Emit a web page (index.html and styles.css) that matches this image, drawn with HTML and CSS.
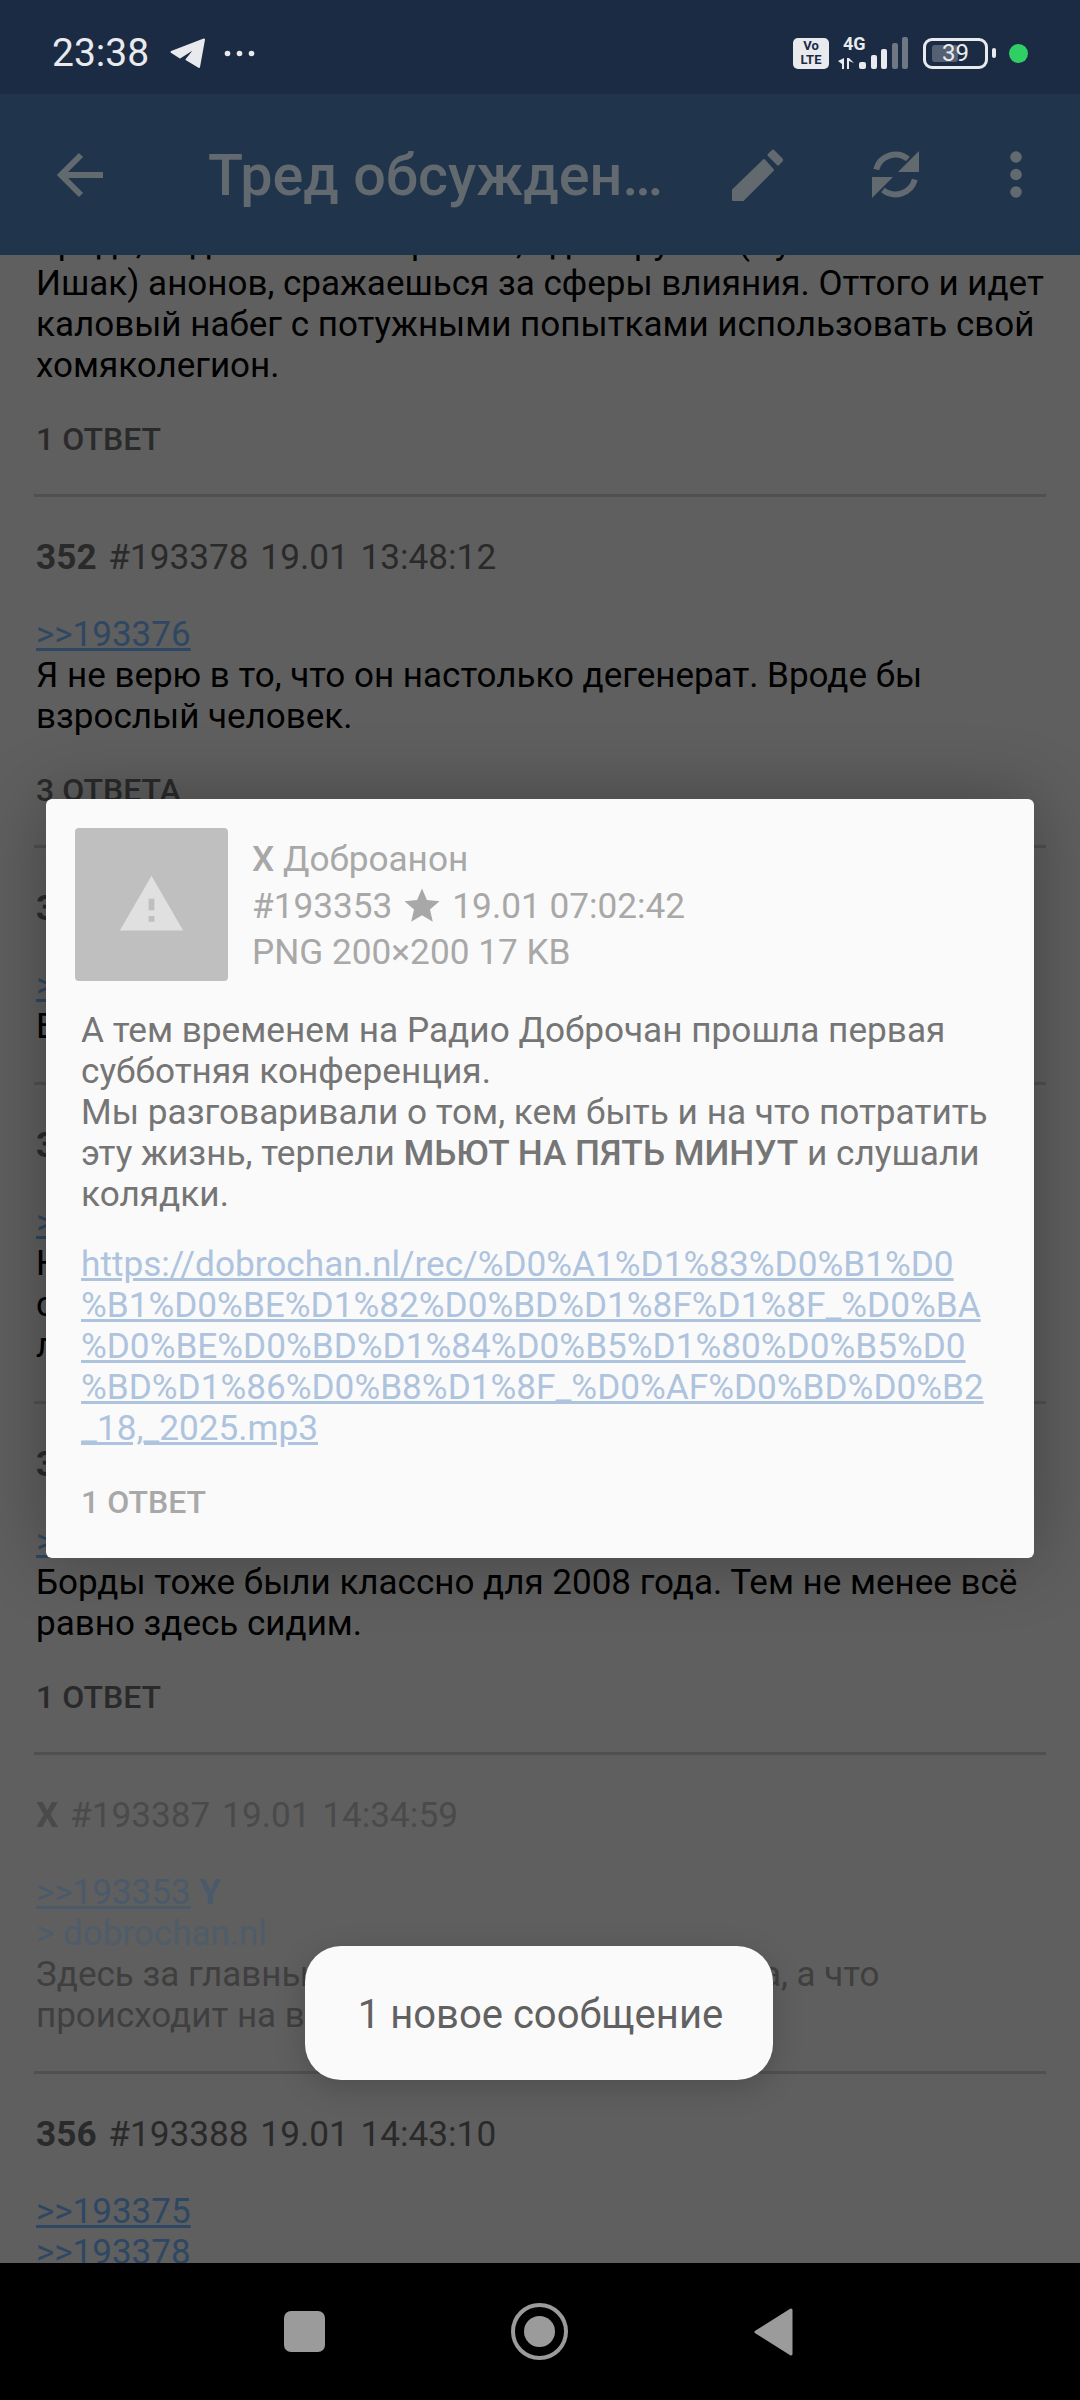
FILE: index.html
```html
<!DOCTYPE html>
<html lang="ru">
<head>
  <meta charset="UTF-8" />
  <meta name="viewport" content="width=device-width, initial-scale=1.0"/>
  <title>Тред обсуждения</title>
  <link rel="stylesheet" href="styles.css">
</head>
<body>
  <div class="screen">
    <div class="status-bar">
      <span class="clock">23:38</span>
      <svg class="tg-icon" viewBox="0 0 36 31"><path d="M1.500 14 34 1.500 29 29 16.500 21.500 26.500 9 10 19.500Z" fill="#e8eaed" stroke="#e8eaed" stroke-width="2" stroke-linejoin="round"/></svg>
      <svg class="more-dots" viewBox="0 0 31 7"><circle cx="3.500" cy="3.500" r="2.800" fill="#e8eaed"/><circle cx="15.500" cy="3.500" r="2.800" fill="#e8eaed"/><circle cx="27.500" cy="3.500" r="2.800" fill="#e8eaed"/></svg>
      <span class="status-gap"></span>
      <span class="volte">Vo<br>LTE</span>
      <svg class="signal" viewBox="0 0 70 34">
        <text x="5" y="14" class="signal-text">4G</text>
        <path d="M0 25 6 22V33H4V28ZM9 33V22H11L16 27 11 25V33Z" fill="#e8eaed"/>
        <rect x="21" y="26" width="7" height="7" rx="2" fill="#e8eaed"/>
        <rect x="33" y="19" width="6" height="14" rx="2" fill="#e8eaed"/>
        <rect x="43" y="13" width="6" height="20" rx="2" fill="#e8eaed"/>
        <rect x="54" y="7" width="6" height="26" rx="2" fill="#6f7782"/>
        <rect x="64" y="1" width="6" height="32" rx="2" fill="#6f7782"/>
      </svg>
      <span class="battery"><span class="battery-fill"></span><span class="battery-num">39</span></span>
      <span class="battery-cap"></span>
      <span class="green-dot"></span>
    </div>

    <div class="toolbar">
      <svg class="back-icon" viewBox="0 0 46 46"><path d="M46 23H5M24 3 4 23 24 43" fill="none" stroke="#62696f" stroke-width="6"/></svg>
      <span class="toolbar-title">Тред обсужден…</span>
      <svg class="pencil" viewBox="0 0 51 52"><path d="M1 41 32 11 41 21 11 51H1Z" fill="#62696f" stroke="#62696f" stroke-width="2" stroke-linejoin="round"/><path d="M37 6 41 2 50 11 46 15Z" fill="#62696f" stroke="#62696f" stroke-width="3" stroke-linejoin="round"/></svg>
      <svg class="refresh" viewBox="0 0 47 47">
        <path d="M4.200 18.500A20 20 0 0 1 36 8M42.800 28.500A20 20 0 0 1 11 39" fill="none" stroke="#62696f" stroke-width="6"/>
        <path d="M47 0V21H26ZM0 26H21L0 47Z" fill="#62696f"/>
      </svg>
      <svg class="menu-dots" viewBox="0 0 12 47"><circle cx="6" cy="6" r="5.800" fill="#62696f"/><circle cx="6" cy="23.500" r="5.800" fill="#62696f"/><circle cx="6" cy="41" r="5.800" fill="#62696f"/></svg>
    </div>

    <div class="content">
      <div class="thread">
        <div class="post">
          <p class="body body-fixed">Вроде, подобно всем прочим, одна группа (Луна и<br>Ишак) анонов, сражаешься за сферы влияния. Оттого и идет<br>каловый набег с потужными попытками использовать свой<br>хомяколегион.</p>
          <div class="replies">1 ОТВЕТ</div>
        </div>

        <div class="post">
          <div class="post-head"><b>352</b> #193378 19.01 13:48:12</div>
          <p class="body"><a class="ref">&gt;&gt;193376</a><br>Я не верю в то, что он настолько дегенерат. Вроде бы взрослый человек.</p>
          <div class="replies">3 ОТВЕТА</div>
        </div>

        <div class="post">
          <div class="post-head"><b>353</b> #193379 19.01 13:51:40</div>
          <p class="body"><a class="ref">&gt;&gt;193378</a><br>Вроде бы да.</p>
        </div>

        <div class="post">
          <div class="post-head"><b>354</b> #193381 19.01 13:58:02</div>
          <p class="body"><a class="ref">&gt;&gt;193378</a><br>Не верю.<br>с тех пор<br>лучше не стало.</p>
        </div>

        <div class="post">
          <div class="post-head"><b>355</b> #193385 19.01 14:20:33</div>
          <p class="body"><a class="ref">&gt;&gt;193378</a><br>Борды тоже были классно для 2008 года. Тем не менее всё равно здесь сидим.</p>
          <div class="replies">1 ОТВЕТ</div>
        </div>

        <div class="post post-op">
          <div class="post-head"><b>X</b> #193387 19.01 14:34:59</div>
          <p class="body"><a class="ref">&gt;&gt;193353</a> <b class="ref-name">Y</b><br><span class="quote">&gt; dobrochan.nl</span><br>Здесь за главным столом сидит Доброанона, а что<br>происходит на всех остальных?</p>
        </div>

        <div class="post">
          <div class="post-head"><b>356</b> #193388 19.01 14:43:10</div>
          <p class="body"><a class="ref">&gt;&gt;193375</a><br><a class="ref">&gt;&gt;193378</a></p>
        </div>
      </div>
    </div>

    <div class="nav-bar">
      <span class="nav-square"></span>
      <svg class="nav-home" viewBox="0 0 57 57"><circle cx="28.500" cy="28.500" r="26.500" fill="none" stroke="#9b9b9b" stroke-width="4"/><circle cx="28.500" cy="28.500" r="15.500" fill="#9b9b9b"/></svg>
      <svg class="nav-back" viewBox="0 0 39 48"><path d="M37 2 2 24 37 46Z" fill="#9b9b9b" stroke="#9b9b9b" stroke-width="3" stroke-linejoin="round"/></svg>
    </div>

    <div class="dialog">
      <div class="dialog-head">
        <div class="thumb">
          <svg viewBox="0 0 24 24" class="thumb-warn"><path d="M1 21h22L12 2 1 21zm12-3h-2v-2h2v2zm0-4h-2v-4h2v4z" fill="#e0e0e0"/></svg>
        </div>
        <div class="dialog-meta">
          <div><b class="meta-name">X</b> Доброанон</div>
          <div class="meta-row">
            <span>#193353</span>
            <svg class="star" viewBox="0 0 24 24"><path d="M12 17.270 18.180 21l-1.640-7.030L22 9.240l-7.190-.610L12 2 9.190 8.630 2 9.240l5.460 4.730L5.820 21z" fill="#a8a8a8"/></svg>
            <span>19.01 07:02:42</span>
          </div>
          <div>PNG 200×200 17 KB</div>
        </div>
      </div>
      <p class="dialog-body">А тем временем на Радио Доброчан прошла первая субботняя конференция.<br>Мы разговаривали о том, кем быть и на что потратить эту жизнь, терпели <b class="shout">МЬЮТ НА ПЯТЬ МИНУТ</b> и слушали колядки.</p>
      <p class="dialog-body dialog-link"><a>https://dobrochan.nl/rec/%D0%A1%D1%83%D0%B1%D0<br>%B1%D0%BE%D1%82%D0%BD%D1%8F%D1%8F_%D0%BA<br>%D0%BE%D0%BD%D1%84%D0%B5%D1%80%D0%B5%D0<br>%BD%D1%86%D0%B8%D1%8F_%D0%AF%D0%BD%D0%B2<br>_18,_2025.mp3</a></p>
      <div class="dialog-replies">1 ОТВЕТ</div>
    </div>

    <div class="toast">1 новое сообщение</div>
  </div>
</body>
</html>
```

FILE: styles.css
```css
* {
  box-sizing: border-box;
}

html, body {
  margin: 0;
  padding: 0;
}

body {
  font-family: Roboto, 'Noto Sans', sans-serif;
  background: #000;
}

.screen {
  position: relative;
  width: 1080px;
  height: 2400px;
  display: flex;
  flex-direction: column;
  overflow: hidden;
  background: #5f5f5f;
}

/* status bar */
.status-bar {
  height: 94px;
  flex: none;
  display: flex;
  align-items: center;
  padding: 12px 52px 0 52px;
  background: #1b2b43;
  color: #e8eaed;
}

.clock {
  font-size: 39px;
  line-height: 40px;
}

.tg-icon {
  width: 36px;
  height: 31px;
  margin-left: 21px;
}

.more-dots {
  width: 31px;
  height: 7px;
  margin-left: 18px;
}

.status-gap {
  flex: 1;
}

.volte {
  width: 36px;
  height: 31px;
  border-radius: 5px;
  background: #e8eaed;
  color: #1b2b43;
  font-size: 13px;
  font-weight: 700;
  line-height: 14px;
  text-align: center;
  padding-top: 1px;
}

.signal {
  width: 70px;
  height: 34px;
  margin-left: 9px;
}

.signal-text {
  font: 700 18px Roboto, sans-serif;
  fill: #e8eaed;
}

.battery {
  position: relative;
  width: 65px;
  height: 31px;
  margin-left: 15px;
  padding: 4px 6px;
  border: 3px solid #e8eaed;
  border-radius: 9px;
}

.battery-fill {
  display: block;
  width: 26px;
  height: 100%;
  border-radius: 3px;
  background: #566073;
}

.battery-num {
  position: absolute;
  top: 0;
  left: 0;
  right: 0;
  font-size: 24px;
  line-height: 25px;
  text-align: center;
}

.battery-cap {
  width: 4px;
  height: 10px;
  margin-left: 4px;
  border-radius: 2px;
  background: #e8eaed;
}

.green-dot {
  width: 19px;
  height: 19px;
  margin-left: 13px;
  border-radius: 50%;
  background: #2fcf66;
}

/* toolbar */
.toolbar {
  height: 161px;
  flex: none;
  display: flex;
  align-items: center;
  position: relative;
  z-index: 1;
  background: #20344b;
}

.back-icon {
  width: 46px;
  height: 46px;
  margin-left: 57px;
}

.toolbar-title {
  flex: 1;
  margin-left: 105px;
  padding-top: 2px;
  font-size: 57.5px;
  font-weight: 500;
  color: #62696f;
  white-space: nowrap;
}

.pencil {
  width: 51px;
  height: 52px;
}

.refresh {
  width: 47px;
  height: 47px;
  margin-left: 89px;
}

.menu-dots {
  width: 12px;
  height: 47px;
  margin: 0 58px 0 91px;
}

/* thread */
.content {
  flex: 1;
  min-height: 0;
  overflow: hidden;
}

.thread {
  margin-top: -33px;
  padding: 0 34px;
  color: #000;
}

.post {
  padding: 39px 0 35px 2px;
  border-bottom: 3px solid #505050;
}

.post:first-child {
  padding-top: 0;
}

.post:last-child {
  border-bottom: none;
}

.post-head {
  font-size: 35.2px;
  line-height: 42px;
  margin-bottom: 36px;
  word-spacing: 3px;
  color: #2a2a2a;
}

.post-op .post-head {
  color: #4a4a4a;
}

.post-op .body {
  color: #3f3f3f;
}

.body {
  margin: 0;
  font-size: 35px;
  line-height: 41px;
}

.body-fixed {
  white-space: nowrap;
}

.ref {
  color: #2e4763;
  text-decoration: underline;
}

.post-op .ref {
  color: #4a5a6b;
}

.ref-name {
  font-weight: 700;
  color: #4a5a6b;
}

.quote {
  color: #4f5c69;
}

.replies {
  margin-top: 33px;
  font-size: 32px;
  font-weight: 500;
  line-height: 40px;
  color: #2a2a2a;
}

/* nav */
.nav-bar {
  height: 137px;
  flex: none;
  display: flex;
  align-items: center;
  justify-content: center;
  padding-right: 3px;
  background: #000;
}

.nav-square {
  width: 41px;
  height: 41px;
  border-radius: 7px;
  background: #9b9b9b;
}

.nav-home {
  width: 57px;
  height: 57px;
  margin-left: 186px;
}

.nav-back {
  width: 39px;
  height: 48px;
  margin-left: 186px;
}

/* overlays */
.dialog {
  position: absolute;
  left: 46px;
  top: 799px;
  width: 988px;
  height: 759px;
  padding: 29px 35px 0 29px;
  border-radius: 6px;
  background: #fafafa;
  box-shadow: 0 0 70px rgba(0, 0, 0, 0.3);
}

.dialog-head {
  display: flex;
  gap: 24px;
  margin-bottom: 29px;
}

.thumb {
  width: 153px;
  height: 153px;
  flex: none;
  display: flex;
  align-items: center;
  justify-content: center;
  border-radius: 4px;
  background: #bfbfbf;
}

.thumb-warn {
  width: 69px;
  height: 69px;
}

.dialog-meta {
  padding-top: 8px;
  font-size: 35.2px;
  line-height: 46.500px;
  white-space: nowrap;
  color: #a8a8a8;
}

.meta-name {
  font-weight: 500;
}

.meta-row {
  display: flex;
  align-items: center;
  gap: 9px;
}

.star {
  width: 42px;
  height: 42px;
}

.dialog-body {
  margin: 0 0 0 6px;
  font-size: 35.2px;
  line-height: 41px;
  color: #757575;
}

.shout {
  font-weight: 500;
}

.dialog-link {
  margin-top: 29px;
  white-space: nowrap;
}

.dialog-link a {
  color: #aec3dd;
  text-decoration: underline;
}

.dialog-replies {
  margin: 33px 0 0 6px;
  font-size: 32px;
  font-weight: 500;
  line-height: 40px;
  color: #a8a8a8;
}

.toast {
  position: absolute;
  left: 305px;
  top: 1946px;
  width: 468px;
  height: 134px;
  display: flex;
  align-items: center;
  justify-content: center;
  padding: 3px 0 0 3px;
  border-radius: 36px;
  background: #fafafa;
  color: #616161;
  font-size: 40px;
  box-shadow: 0 8px 30px rgba(0, 0, 0, 0.18);
}
```
